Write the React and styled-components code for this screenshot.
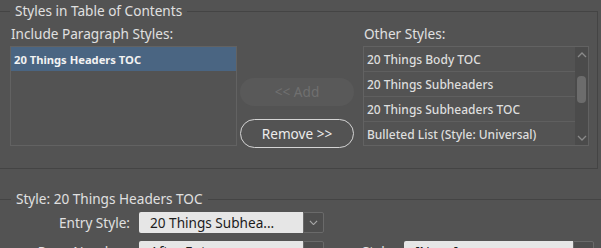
import React from "react";
import styled, { createGlobalStyle } from "styled-components";

const Global = createGlobalStyle`
  html, body { margin: 0; padding: 0; background: #535353; overflow: hidden; }
  body { font-family: "Noto Sans", "Open Sans", sans-serif; color: #e2e2e2; }
`;

const Page = styled.div`
  width: 601px;
  height: 248px;
  padding-top: 3px;
  box-sizing: border-box;
  overflow: hidden;
`;

const Group = styled.fieldset`
  margin: 0;
  padding: ${p => p.$pad || "7px 8px 22px 10px"};
  width: ${p => p.$width || "598px"};
  box-sizing: border-box;
  border: 1px solid #444;
  border-left: none;
  border-bottom: ${p => (p.$open ? "none" : "1px solid #444")};
  border-right: ${p => (p.$open ? "none" : "1px solid #444")};
  min-width: 0;
  & + & { margin-top: 22px; }
`;

const Legend = styled.legend`
  padding: 0 ${p => p.$px || 5}px;
  font-size: 13.6px;
  line-height: 16px;
  color: #e0e0e0;
`;

const Columns = styled.div`
  display: grid;
  grid-template-columns: 227px 126px 226px;
  align-items: start;
`;

const Column = styled.div`
  display: flex;
  flex-direction: column;
`;

const Label = styled.div`
  font-size: 13.6px;
  line-height: 16px;
  margin: 0 0 4px 1px;
  color: #e0e0e0;
  white-space: nowrap;
`;

const ListBox = styled.div`
  height: 100px;
  box-sizing: border-box;
  border: 1px solid #626262;
  display: flex;
  overflow: hidden;
`;

const Rows = styled.div`
  flex: 1;
  display: flex;
  flex-direction: column;
`;

const Row = styled.div`
  height: 24px;
  flex-shrink: 0;
  display: flex;
  align-items: center;
  padding-left: 3px;
  font-size: ${p => (p.$selected ? 11.2 : 12)}px;
  font-weight: ${p => (p.$selected ? 700 : 500)};
  color: ${p => (p.$selected ? "#f2f2f2" : "#dedede")};
  background: ${p => (p.$selected ? "#4a6582" : "transparent")};
  border-bottom: ${p => (p.$lined ? "1px solid #5f5f5f" : "none")};
  white-space: nowrap;
`;

const ScrollTrack = styled.div`
  width: 13px;
  background: #4b4b4b;
  display: flex;
  flex-direction: column;
  align-items: center;
  justify-content: space-between;
  padding: 5px 0 4px;
  box-sizing: border-box;
`;

const Thumb = styled.div`
  width: 9px;
  height: 27px;
  border-radius: 4px;
  background: #6c6c6c;
  margin-bottom: 14px;
`;

const Buttons = styled(Column)`
  height: 120px;
  box-sizing: border-box;
  padding: 52px 0 0 3px;
  gap: 13px;
  align-items: flex-start;
`;

const Pill = styled.button`
  width: 114px;
  height: ${p => (p.$disabled ? 28 : 29)}px;
  flex-shrink: 0;
  border-radius: 15px;
  box-sizing: border-box;
  font-family: inherit;
  font-size: 13.6px;
  padding: 0 0 1px;
  background: ${p => (p.$disabled ? "#595959" : "transparent")};
  color: ${p => (p.$disabled ? "#707070" : "#ececec")};
  border: ${p => (p.$disabled ? "none" : "1.5px solid #d4d4d4")};
`;

const FieldRow = styled.div`
  display: flex;
  align-items: center;
  height: 21px;
  & + & { margin-top: 8px; }
`;

const FieldLabel = styled.div`
  width: ${p => p.$w}px;
  text-align: right;
  padding-right: ${p => p.$gap || 9}px;
  box-sizing: border-box;
  font-size: 13.6px;
  color: #e0e0e0;
  white-space: nowrap;
`;

const Select = styled.div`
  width: ${p => p.$w}px;
  height: 21px;
  display: flex;
  flex-shrink: 0;
`;

const SelectValue = styled.div`
  flex: 1;
  background: #e6e6e6;
  color: #1c1c1c;
  font-size: 13.6px;
  line-height: 21px;
  padding-left: 11px;
  border-radius: 2px 0 0 2px;
  white-space: nowrap;
  overflow: hidden;
`;

const SelectArrow = styled.div`
  width: 21px;
  box-sizing: border-box;
  border: 1px solid #6a6a6a;
  border-radius: 0 2px 2px 0;
  background: #4e4e4e;
  display: flex;
  align-items: center;
  justify-content: center;
`;

const Chevron = ({ up, color = "#a8a8a8", w = 9 }) => (
  <svg width={w} height={w / 2 + 1} viewBox="0 0 10 6">
    <polyline
      points={up ? "1,5 5,1 9,5" : "1,1 5,5 9,1"}
      fill="none"
      stroke={color}
      strokeWidth="1.3"
    />
  </svg>
);

const Dropdown = ({ w, value }) => (
  <Select $w={w}>
    <SelectValue>{value}</SelectValue>
    <SelectArrow>
      <Chevron />
    </SelectArrow>
  </Select>
);

const otherStyles = [
  "20 Things Body TOC",
  "20 Things Subheaders",
  "20 Things Subheaders TOC",
  "Bulleted List (Style: Universal)",
];

export default function App() {
  return (
    <Page>
      <Global />
      <Group>
        <Legend>Styles in Table of Contents</Legend>
        <Columns>
          <Column>
            <Label>Include Paragraph Styles:</Label>
            <ListBox>
              <Rows>
                <Row $selected>20 Things Headers TOC</Row>
              </Rows>
            </ListBox>
          </Column>
          <Buttons>
            <Pill $disabled>&lt;&lt; Add</Pill>
            <Pill>Remove &gt;&gt;</Pill>
          </Buttons>
          <Column>
            <Label>Other Styles:</Label>
            <ListBox>
              <Rows>
                {otherStyles.map((s, i) => (
                  <Row key={s} $lined={i < otherStyles.length - 1}>{s}</Row>
                ))}
              </Rows>
              <ScrollTrack>
                <Chevron up color="#8a8a8a" w={10} />
                <Thumb />
                <Chevron color="#8a8a8a" w={10} />
              </ScrollTrack>
            </ListBox>
          </Column>
        </Columns>
      </Group>
      <Group $open $width="601px" $pad="5px 0 0 11px">
        <Legend $px={5}>Style: 20 Things Headers TOC</Legend>
        <FieldRow>
          <FieldLabel $w={128}>Entry Style:</FieldLabel>
          <Dropdown w={185} value="20 Things Subhea..." />
        </FieldRow>
        <FieldRow>
          <FieldLabel $w={128}>Page Number:</FieldLabel>
          <Dropdown w={185} value="After Entry" />
          <FieldLabel $w={80} $gap={8}>Style:</FieldLabel>
          <Dropdown w={190} value="[None]" />
        </FieldRow>
      </Group>
    </Page>
  );
}
